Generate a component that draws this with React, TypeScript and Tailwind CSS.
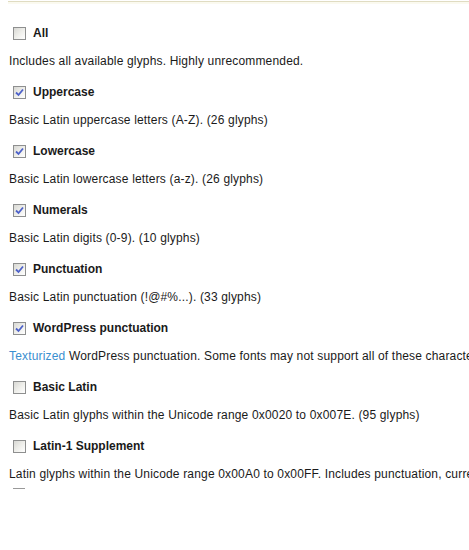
import React from 'react';

type Item = {
  name: string;
  checked: boolean;
  desc: React.ReactNode;
};

const items: Item[] = [
  { name: 'All', checked: false, desc: 'Includes all available glyphs. Highly unrecommended.' },
  { name: 'Uppercase', checked: true, desc: 'Basic Latin uppercase letters (A-Z). (26 glyphs)' },
  { name: 'Lowercase', checked: true, desc: 'Basic Latin lowercase letters (a-z). (26 glyphs)' },
  { name: 'Numerals', checked: true, desc: 'Basic Latin digits (0-9). (10 glyphs)' },
  { name: 'Punctuation', checked: true, desc: 'Basic Latin punctuation (!@#%...). (33 glyphs)' },
  {
    name: 'WordPress punctuation',
    checked: true,
    desc: (
      <>
        <a href="#" className="text-[#3a8fd0]">Texturized</a> WordPress punctuation. Some fonts may not support all of these characters. (13 glyphs)
      </>
    ),
  },
  { name: 'Basic Latin', checked: false, desc: 'Basic Latin glyphs within the Unicode range 0x0020 to 0x007E. (95 glyphs)' },
  {
    name: 'Latin-1 Supplement',
    checked: false,
    desc: 'Latin glyphs within the Unicode range 0x00A0 to 0x00FF. Includes punctuation, currency symbols and accented letters. (96 glyphs)',
  },
];

// old XP-style checkbox
const Check = ({ checked }: { checked: boolean }) => (
  <span className="ml-[4px] mr-[7px] flex h-[13px] w-[13px] shrink-0 items-center justify-center border border-[#8e8f8f] bg-gradient-to-br from-[#d8d8d4] via-[#eeeeea] to-white">
    {checked && (
      <svg width="9" height="9" viewBox="0 0 9 9">
        <path d="M1 4.5 L3.5 7 L8 1.5" fill="none" stroke="#4d61c9" strokeWidth="1.8" />
      </svg>
    )}
  </span>
);

export default function App() {
  return (
    <div className="h-[550px] w-[469px] overflow-hidden bg-white font-['Liberation_Sans',Arial,sans-serif] text-[12px] text-[#1a1a1a]">
      <div className="ml-2 mt-[1px] h-px bg-[#e0dcc2]" />
      <div className="h-[2px] ml-2 bg-[#fbfaf0]" />
      <div className="flex flex-col gap-[11px] pl-[9px] pt-[19px]">
        {items.map((it) => (
          <div key={it.name}>
            <label className="flex h-5 items-center font-bold">
              <Check checked={it.checked} />
              {it.name}
            </label>
            <p className="mt-2 whitespace-nowrap leading-5 tracking-[0.17px]">{it.desc}</p>
          </div>
        ))}
      </div>
      <div className="ml-[13px] mt-[4px] h-px w-[12px] bg-[#999]" />
    </div>
  );
}
